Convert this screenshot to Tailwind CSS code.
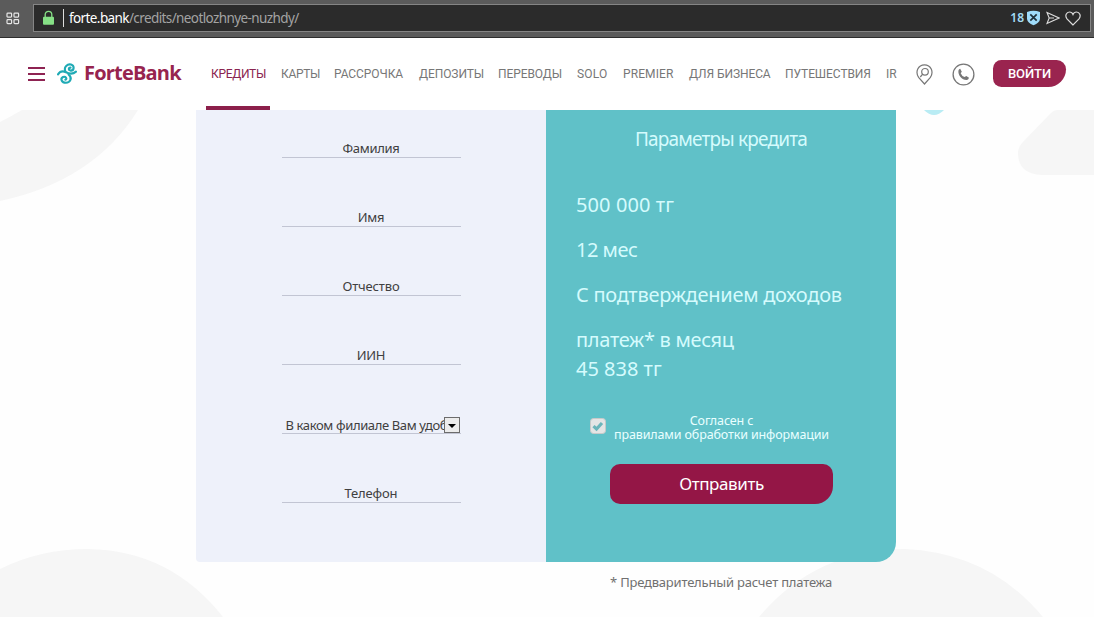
<!DOCTYPE html>
<html lang="ru">
<head>
  <meta charset="UTF-8" />
  <title>ForteBank</title>
  <script src="https://cdn.jsdelivr.net/npm/@tailwindcss/browser@4"></script>
</head>
<body class="relative flex flex-col w-[1094px] h-[617px] overflow-hidden bg-[#fefefe] font-['Noto_Sans',sans-serif]">

  <!-- background shapes -->
  <svg class="absolute inset-0 -z-10" width="1094" height="617" viewBox="0 0 1094 617" fill="#f6f6f6">
    <path d="M0 122Q10 117 22 110H138Q94 181 0 201Z" />
    <path d="M1057 110H1094V175H1042Q1018 174 1018 153Q1018 148 1022 143L1051 113Q1054 110 1057 110Z" />
    <path d="M0 569Q40 549 88 549Q170 550 223 617H0Z" />
    <path d="M759 617Q815 550 905 549Q990 553 1043 617Z" />
    <path fill="#b9ecf4" d="M924 110H944Q934 120 924 110Z" />
  </svg>

  <!-- address bar -->
  <div class="flex items-center h-[38px] shrink-0 bg-[#5b5b5b] border-b border-[#2d2d2d] pl-[6px] pr-[3px] pb-px">
    <svg width="14" height="13" viewBox="0 0 14 13" fill="none" stroke="#e6e6e6" stroke-width="1.2">
      <rect x="1" y="1.1" width="4.6" height="4" rx=".8" /><rect x="8" y="1.1" width="4.6" height="4" rx=".8" />
      <rect x="1" y="7.6" width="4.6" height="4" rx=".8" /><rect x="8" y="7.6" width="4.6" height="4" rx=".8" />
    </svg>
    <div class="flex items-center flex-1 h-[28px] ml-[13px] bg-[#2b2b2b] border border-[#858585] pl-[8px] pr-[9px]">
      <svg width="13" height="16" viewBox="0 0 13 16">
        <path d="M3.2 7V4.6a3.3 3.3 0 0 1 6.6 0V7" fill="none" stroke="#86e086" stroke-width="1.3" />
        <rect x="1" y="6.8" width="11" height="8" rx="1" fill="#86e086" />
      </svg>
      <div class="w-px h-[18px] ml-[8px] bg-[#dddddd]"></div>
      <div class="ml-[5px] text-[13.5px] tracking-[-0.6px] text-[#a3a3a3] whitespace-nowrap"><span class="text-white">forte.bank</span>/credits/neotlozhnye-nuzhdy/</div>
      <div class="ml-auto flex items-center">
        <span class="text-[12px] font-semibold text-[#a5dcf5] mr-[2px]">18</span>
        <svg width="15" height="16" viewBox="0 0 15 16">
          <path d="M1 2Q7.5-.4 14 2V9Q13.500 13 7.500 15.300Q1.500 13 1 9Z" fill="#9fdcfb" />
          <path d="M4.300 4.300L10.700 10.700M10.700 4.300L4.300 10.700" stroke="#20313b" stroke-width="1.700" />
        </svg>
        <svg class="ml-[5px]" width="14" height="14" viewBox="0 0 14 14" fill="none" stroke="#dcdcdc" stroke-width="1.1">
          <path d="M1 1.500L13 7L1 12.500L3.200 7ZM3.200 7H8" />
        </svg>
        <svg class="ml-[5px]" width="16" height="15" viewBox="0 0 16 15" fill="none" stroke="#dcdcdc" stroke-width="1.2">
          <path d="M8 14L2 7.800C-.5 4.500 1.500 1 4.500 1Q7 1 8 3.500Q9 1 11.500 1C14.500 1 16.500 4.500 14 7.800Z" />
        </svg>
      </div>
    </div>
  </div>

  <!-- header -->
  <header class="flex items-center h-[72px] shrink-0 bg-white pl-[28px]">
    <svg width="17" height="14" viewBox="0 0 17 14" fill="#8e2352">
      <rect width="17" height="2" /><rect y="6" width="17" height="2" /><rect y="12" width="17" height="2" />
    </svg>
    <svg class="ml-[12px] -mt-[2px]" width="20" height="21" viewBox="0 0 20 21" fill="none" stroke="#1faab5" stroke-width="2.1" stroke-linecap="round">
      <path d="M1 11.400Q4 6.800 9 9.300Q15 12.200 19 8.600" />
      <path d="M8.600 9C6 3.500 11 .8 14 1.600C18 2.900 17 8 13.500 7.600C11 7 11.500 4.500 13.500 4.600" />
      <path d="M11.500 11.500C16 15 13 19.800 9 19.800C4.500 19.800 3 15.500 6 14C9 13 10.500 16 8.300 16.700" />
    </svg>
    <div class="ml-[7px] -mt-[2px] w-[127px] text-[20px] font-bold text-[#97244f] tracking-[-0.8px] font-['Open_Sans',sans-serif]">ForteBank</div>
    <nav class="grid grid-cols-[70px_53px_85px_79px_79px_46px_66px_96px_101px_31px] h-full items-center text-[12px] tracking-[-0.08px] text-[#777777] whitespace-nowrap font-[Roboto,sans-serif]">
      <a class="relative flex items-center h-full text-[#8a2450] tracking-[-0.3px]">КРЕДИТЫ<span class="absolute bottom-0 -left-[5px] w-[64px] h-[4px] bg-[#8c1f4b]"></span></a>
      <a class="tracking-[-0.3px]">КАРТЫ</a>
      <a>РАССРОЧКА</a>
      <a>ДЕПОЗИТЫ</a>
      <a>ПЕРЕВОДЫ</a>
      <a class="tracking-[0.2px]">SOLO</a>
      <a class="tracking-[0.1px]">PREMIER</a>
      <a>ДЛЯ БИЗНЕСА</a>
      <a>ПУТЕШЕСТВИЯ</a>
      <a>IR</a>
    </nav>
    <svg class="-ml-px" width="17" height="21" viewBox="0 0 17 21" fill="none" stroke="#777" stroke-width="1.200">
      <path d="M8.500 20L2.600 13.300C-1 8 2 .8 8.500 .8C15 .8 18 8 14.400 13.300Z" />
      <circle cx="9" cy="7.800" r="3.300" /><path d="M6.700 10.200L4.300 13" />
    </svg>
    <svg class="ml-[19px]" width="23" height="23" viewBox="0 0 23 23">
      <circle cx="11.500" cy="11.500" r="10.400" fill="none" stroke="#777" stroke-width="1.300" />
      <path d="M6.500 7.200Q7 6 8.200 5.800L9.800 8.700L8.700 10.200Q9.800 13 12.600 14.100L14.300 13.100L17 14.800Q16.500 16.500 15 17C10.500 17.500 5.500 12 6.500 7.200Z" fill="#777" />
    </svg>
    <button class="ml-[18px] w-[73px] h-[27px] -mt-px bg-[#9a244f] rounded-[9px] rounded-tr-[10px] rounded-br-[19px] text-white text-[13px] tracking-[-0.1px] font-medium font-[Roboto,sans-serif]">ВОЙТИ</button>
  </header>

  <main class="ml-[196px] w-[700px]">
    <div class="flex h-[452px]">
      <form class="w-[350px] bg-[#eef1fa] rounded-bl-[4px] pt-[29px] flex flex-col items-center gap-[50px] text-[13px] tracking-[-0.3px] text-[#404040] text-center">
        <div class="w-[179px] h-[19px] leading-[18px] border-b border-[#c2c5d3]">Фамилия</div>
        <div class="w-[179px] h-[19px] leading-[18px] border-b border-[#c2c5d3]">Имя</div>
        <div class="w-[179px] h-[19px] leading-[18px] border-b border-[#c2c5d3] tracking-[-0.15px]">Отчество</div>
        <div class="w-[179px] h-[19px] leading-[18px] border-b border-[#c2c5d3]">ИИН</div>
        <div class="flex w-[179px] h-[19px] leading-[20px] border-b border-[#c2c5d3]">
          <div class="pl-[4px] w-[162px] h-[19px] overflow-hidden whitespace-nowrap text-left tracking-[-0.37px]">В каком филиале Вам удобно</div>
          <div class="flex items-center justify-center w-[16px] h-[16px] mt-[2px] shrink-0 bg-[#ececec] border border-[#6c6c6c]">
            <svg class="mt-[2px]" width="8" height="4" viewBox="0 0 8 4"><path d="M0 0H8L4 4Z" /></svg>
          </div>
        </div>
        <div class="w-[179px] h-[19px] leading-[18px] border-b border-[#c2c5d3] tracking-[-0.15px]">Телефон</div>
      </form>
      <div class="w-[350px] bg-[#60c1c8] rounded-br-[20px] text-[#d5fbfd]">
        <h2 class="pt-[15px] leading-[29px] text-[19px] tracking-[-0.82px] text-center">Параметры кредита</h2>
        <div class="pl-[30px] pt-[36px] flex flex-col gap-[16px] text-[20px] leading-[29px] whitespace-nowrap">
          <p class="tracking-[0.1px]">500 000 тг</p>
          <p class="tracking-[-0.5px]">12 мес</p>
          <p class="tracking-[-0.26px]">С подтверждением доходов</p>
          <p><span class="tracking-[-0.3px]">платеж* в месяц</span><br>45 838 тг</p>
        </div>
        <div class="flex items-center mt-[30px] pl-[44px] h-[28px]">
          <svg class="-mt-[2px]" width="16" height="16" viewBox="0 0 16 16">
            <rect x=".5" y=".5" width="15" height="15" rx="3" fill="#e5e5e5" stroke="#c9c9c9" />
            <path d="M3.500 8.200L6.500 11L12 5" fill="none" stroke="#6cb5bb" stroke-width="3.200" />
          </svg>
          <p class="ml-[8px] mt-[2px] w-[215px] text-center text-[12.500px] tracking-[-0.13px] leading-[14px] text-[#e9ffff] whitespace-nowrap">Согласен с<br>правилами обработки информации</p>
        </div>
        <button class="block mt-[23px] ml-[64px] w-[223px] h-[40px] bg-[#941646] rounded-[10px] rounded-br-[18px] text-white text-[17px] tracking-[-0.4px]">Отправить</button>
      </div>
    </div>
    <p class="mt-[10px] ml-[414px] leading-[20px] text-[13px] tracking-[-0.2px] text-[#707070] whitespace-nowrap">* Предварительный расчет платежа</p>
  </main>

</body>
</html>
